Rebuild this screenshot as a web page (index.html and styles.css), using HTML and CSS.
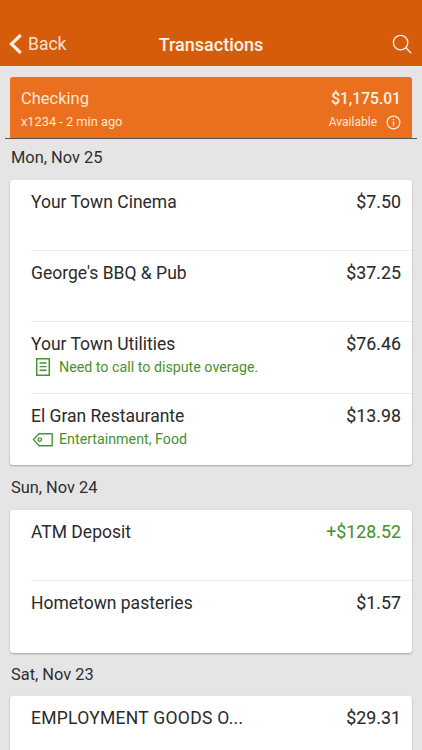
FILE: index.html
```html
<!DOCTYPE html>
<html lang="en">
<head>
<meta charset="utf-8">
<title>Transactions</title>
<link rel="stylesheet" href="styles.css">
</head>
<body>
<header class="nav">
  <a class="back">
    <svg class="chevron" viewBox="0 0 14 22" width="14" height="22"><path d="M11.8 2 2.4 11l9.4 9" fill="none" stroke="#fbeee2" stroke-width="3.2"/></svg>
    <span>Back</span>
  </a>
  <h1 class="title">Transactions</h1>
  <svg class="search" viewBox="0 0 20 20" width="20" height="20"><circle cx="8.6" cy="8.6" r="7.2" fill="none" stroke="#fbeee2" stroke-width="1.3"/><path d="m13.8 13.8 5.4 5.4" fill="none" stroke="#fbeee2" stroke-width="1.3"/></svg>
</header>
<div class="account-wrap">
  <section class="account">
    <div class="account-row">
      <span class="account-name">Checking</span>
      <span class="account-balance">$1,175.01</span>
    </div>
    <div class="account-row account-sub">
      <span>x1234 - 2 min ago</span>
      <span class="available">Available
        <svg viewBox="0 0 16 16" width="15" height="15"><circle cx="8" cy="8" r="6.8" fill="none" stroke="#fdeee0" stroke-width="1.3"/><path d="M8 7v4.4" fill="none" stroke="#fdeee0" stroke-width="1.4"/><circle cx="8" cy="4.8" r=".9" fill="#fdeee0"/></svg>
      </span>
    </div>
  </section>
</div>
<main class="list">
  <h2 class="date date-first">Mon, Nov 25</h2>
  <section class="card">
    <div class="row"><div class="line"><span>Your Town Cinema</span><span class="amount">$7.50</span></div></div>
    <div class="row"><div class="line"><span>George's BBQ &amp; Pub</span><span class="amount">$37.25</span></div></div>
    <div class="row"><div class="line"><span>Your Town Utilities</span><span class="amount">$76.46</span></div>
      <div class="note">
        <svg viewBox="0 0 22 20" width="22" height="20"><path d="M5.7 1.7h12.6v16.6H5.7z" fill="none" stroke="#4a9130" stroke-width="1.5"/><path d="M8.5 6h7M8.5 9.6h7M8.5 13.2h7" fill="none" stroke="#4a9130" stroke-width="1.4"/></svg>
        <span>Need to call to dispute overage.</span>
      </div>
    </div>
    <div class="row"><div class="line"><span>El Gran Restaurante</span><span class="amount">$13.98</span></div>
      <div class="note">
        <svg viewBox="0 0 22 20" width="22" height="20"><path d="M21.2 4.7H8L2.5 10.6 8 16.7h13.2z" fill="none" stroke="#4a9130" stroke-width="1.4" stroke-linejoin="round"/><circle cx="8.8" cy="10.6" r="1.7" fill="none" stroke="#4a9130" stroke-width="1.3"/></svg>
        <span>Entertainment, Food</span>
      </div>
    </div>
  </section>
  <h2 class="date date-wide">Sun, Nov 24</h2>
  <section class="card card-tall">
    <div class="row"><div class="line"><span>ATM Deposit</span><span class="amount credit">+$128.52</span></div></div>
    <div class="row"><div class="line"><span>Hometown pasteries</span><span class="amount">$1.57</span></div></div>
  </section>
  <h2 class="date">Sat, Nov 23</h2>
  <section class="card">
    <div class="row"><div class="line"><span class="caps">EMPLOYMENT GOODS O...</span><span class="amount">$29.31</span></div></div>
  </section>
</main>
</body>
</html>
```
FILE: styles.css
```css
* { box-sizing: border-box; }
html, body { margin: 0; height: 100%; }
body {
  width: 422px;
  height: 750px;
  overflow: hidden;
  background: #e5e5e5;
  font-family: Roboto, "Liberation Sans", sans-serif;
  color: #2b2b2b;
}
.nav {
  height: 66px;
  background: #d55c0b;
  padding: 21px 10px 0 9px;
  display: flex;
  align-items: center;
  justify-content: space-between;
  position: relative;
  color: #fbeee2;
}
.back { display: flex; align-items: center; gap: 5px; font-size: 17.5px; color: #f9e3d0; }
.chevron { display: block; }
.title {
  position: absolute;
  left: 0; right: 0; top: 22px; bottom: 0;
  margin: 0;
  display: flex; align-items: center; justify-content: center;
  font-size: 18px; font-weight: 500; color: #fdf3ea;
}
.search { display: block; }
.account-wrap {
  margin: 0 5px;
  padding: 11px 5px 0;
  border-bottom: 1px solid #555;
}
.account {
  height: 61px;
  background: #ea7020;
  border-radius: 3px 3px 0 0;
  padding: 11px 11px 0;
  color: #fbe6d4;
}
.account-row { display: flex; justify-content: space-between; align-items: center; }
.account-name { font-size: 16.5px; line-height: 22px; }
.account-balance { font-size: 15.6px; line-height: 22px; font-weight: 500; color: #fdf1e6; }
.account-sub { font-size: 12.8px; line-height: 20px; margin-top: 2px; }
.available { display: flex; align-items: center; gap: 9px; font-size: 12px; }
.available svg { display: block; }
.list { padding: 0 10px; }
.date {
  margin: 0;
  height: 43px;
  padding: 0 1px;
  display: flex; align-items: center;
  font-size: 16.4px; font-weight: 400;
  color: #2e2e2e;
}
.date-first { height: 41px; padding-bottom: 4px; }
.date-wide { height: 45px; }
.card {
  background: #fff;
  border-radius: 3px;
  box-shadow: 0 1px 2px rgba(0,0,0,.3);
  padding: 0 0 .8px 21px;
}
.card-tall { padding-bottom: 1.8px; }
.row {
  height: 71.4px;
  padding: 11px 11px 0 0;
  border-top: 1px solid #ececec;
}
.row:first-child { height: 70px; border-top: 0; }
.line { display: flex; justify-content: space-between; font-size: 17.5px; line-height: 22px; }
.caps { letter-spacing: .28px; }
.amount { font-size: 17.8px; -webkit-text-stroke: .1px currentColor; }
.credit { color: #4a9130; }
.note {
  display: flex; align-items: center; gap: 6px;
  margin-top: 2px;
  font-size: 14.25px; line-height: 20px;
  color: #4a9130;
}
.note svg { display: block; flex: none; }
```
